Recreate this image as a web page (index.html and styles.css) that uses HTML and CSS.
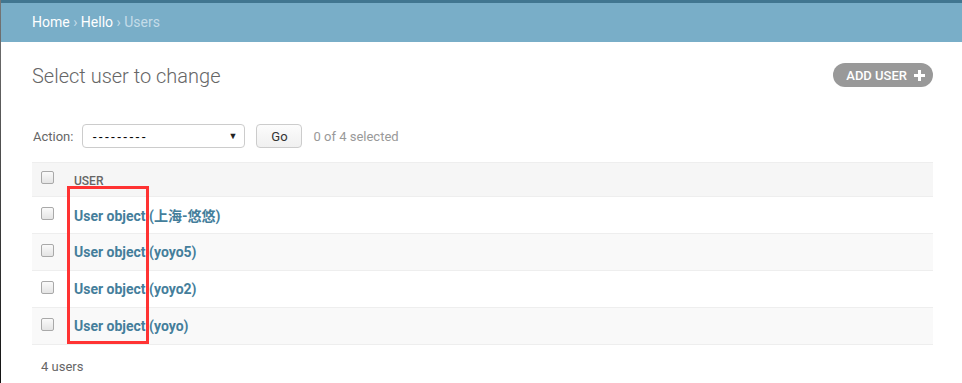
FILE: index.html
```html
<!DOCTYPE html>
<html lang="en">
<head>
    <meta charset="UTF-8">
    <title>Select user to change</title>
    <link rel="stylesheet" href="styles.css">
</head>
<body>
    <div class="page">
        <div class="topbar"></div>
        <div class="breadcrumbs">
            <a href="#">Home</a> &rsaquo; <a href="#">Hello</a> &rsaquo; Users
        </div>

        <div class="content">
            <div class="title-row">
                <h1>Select user to change</h1>
                <a class="add-link" href="#">ADD USER <span class="plus"></span></a>
            </div>

            <div class="actions">
                <label>Action:</label>
                <div class="select">
                    <span class="dashes">---------</span>
                    <span class="arrow">&#9660;</span>
                </div>
                <button class="go-btn">Go</button>
                <span class="counter">0 of 4 selected</span>
            </div>

            <div class="result-list">
                <div class="row head">
                    <div class="check"><input type="checkbox"></div>
                    <div class="cell">User</div>
                </div>
                <div class="row">
                    <div class="check"><input type="checkbox"></div>
                    <div class="cell"><a href="#">User object (上海-悠悠)</a></div>
                </div>
                <div class="row alt">
                    <div class="check"><input type="checkbox"></div>
                    <div class="cell"><a href="#">User object (yoyo5)</a></div>
                </div>
                <div class="row">
                    <div class="check"><input type="checkbox"></div>
                    <div class="cell"><a href="#">User object (yoyo2)</a></div>
                </div>
                <div class="row alt">
                    <div class="check"><input type="checkbox"></div>
                    <div class="cell"><a href="#">User object (yoyo)</a></div>
                </div>
                <!-- annotation box drawn over the list -->
                <div class="mark"></div>
            </div>

            <p class="paginator">4 users</p>
        </div>
    </div>
</body>
</html>
```

FILE: styles.css
```css
body {
    margin: 0;
    background-color: #fff;
    color: #333;
    font-family: Roboto, "Noto Sans CJK SC", "Liberation Sans", sans-serif;
    font-size: 13px;
}

.page {
    height: 383px;
    border-left: 1px solid #3a3a3a;
    border-image: linear-gradient(#777, #111) 1;
    box-sizing: border-box;
    overflow: hidden;
}

.topbar {
    height: 3px;
    background-color: #417690;
}

.breadcrumbs {
    height: 39px;
    line-height: 39px;
    padding: 0 31px;
    background-color: #79aec8;
    color: #c4dce8;
    font-size: 14px;
}

.breadcrumbs a {
    color: #fff;
    text-decoration: none;
}

.content {
    padding: 21px 29px 0 31px;
}

.title-row {
    display: flex;
    justify-content: space-between;
    align-items: center;
    height: 24px;
}

h1 {
    margin: 0;
    font-size: 20px;
    font-weight: 300;
    color: #666;
    line-height: 24px;
    position: relative;
    top: 1px;
}

.add-link {
    display: flex;
    align-items: center;
    gap: 7px;
    height: 24px;
    padding: 0 8px 0 13px;
    border-radius: 15px;
    background-color: #999;
    color: #fff;
    font-size: 13px;
    font-weight: 500;
    text-decoration: none;
}

.plus {
    position: relative;
    width: 11px;
    height: 11px;
}

.plus::before, .plus::after {
    content: "";
    position: absolute;
    background: #fff;
}

.plus::before {
    left: 4px;
    top: 0;
    width: 3px;
    height: 11px;
}

.plus::after {
    left: 0;
    top: 4px;
    width: 11px;
    height: 3px;
}

.actions {
    display: flex;
    align-items: center;
    height: 24px;
    margin-top: 37px;
    color: #666;
}

.actions label {
    margin-left: 1px;
    margin-right: 9px;
}

.select {
    display: flex;
    justify-content: space-between;
    align-items: center;
    box-sizing: border-box;
    width: 163px;
    height: 24px;
    padding: 0 7px 0 9px;
    border: 1px solid #ccc;
    border-radius: 4px;
    color: #000;
    font-family: "Liberation Sans", sans-serif;
    font-size: 13px;
}

.dashes {
    letter-spacing: 1.8px;
}

.arrow {
    font-size: 9px;
    color: #222;
}

.go-btn {
    box-sizing: border-box;
    width: 46px;
    height: 24px;
    margin-left: 11px;
    border: 1px solid #ccc;
    border-radius: 4px;
    background: linear-gradient(#fcfcfc, #f0f0f0);
    color: #333;
    font-family: Roboto, sans-serif;
    font-size: 13px;
}

.counter {
    margin-left: 11px;
    color: #999;
}

.result-list {
    position: relative;
    margin-top: 14px;
}

.row {
    display: flex;
    align-items: center;
    height: 36px;
    border-bottom: 1px solid #eee;
}

.row.head {
    height: 33px;
    background-color: #f6f6f6;
    border-top: 1px solid #eee;
}

.row.alt {
    background-color: #f9f9f9;
}

.check {
    width: 42px;
    padding-left: 9px;
    box-sizing: border-box;
    display: flex;
    position: relative;
    top: -2px;
}

.check input {
    appearance: none;
    margin: 0;
    width: 13px;
    height: 13px;
    border: 1px solid #a9a9a9;
    border-radius: 2px;
    background: linear-gradient(#fafafa, #e4e4e4);
}

.cell {
    font-size: 14px;
}

.head .cell {
    color: #666;
    font-size: 12px;
    font-weight: 500;
    text-transform: uppercase;
    position: relative;
    top: 1px;
}

.cell a {
    color: #447e9b;
    font-weight: bold;
    text-decoration: none;
}

.mark {
    position: absolute;
    left: 35px;
    top: 24px;
    width: 76px;
    height: 152px;
    border: 3px solid #f33;
}

.paginator {
    margin: 14px 0 0 9px;
    line-height: 16px;
    color: #666;
}
```
